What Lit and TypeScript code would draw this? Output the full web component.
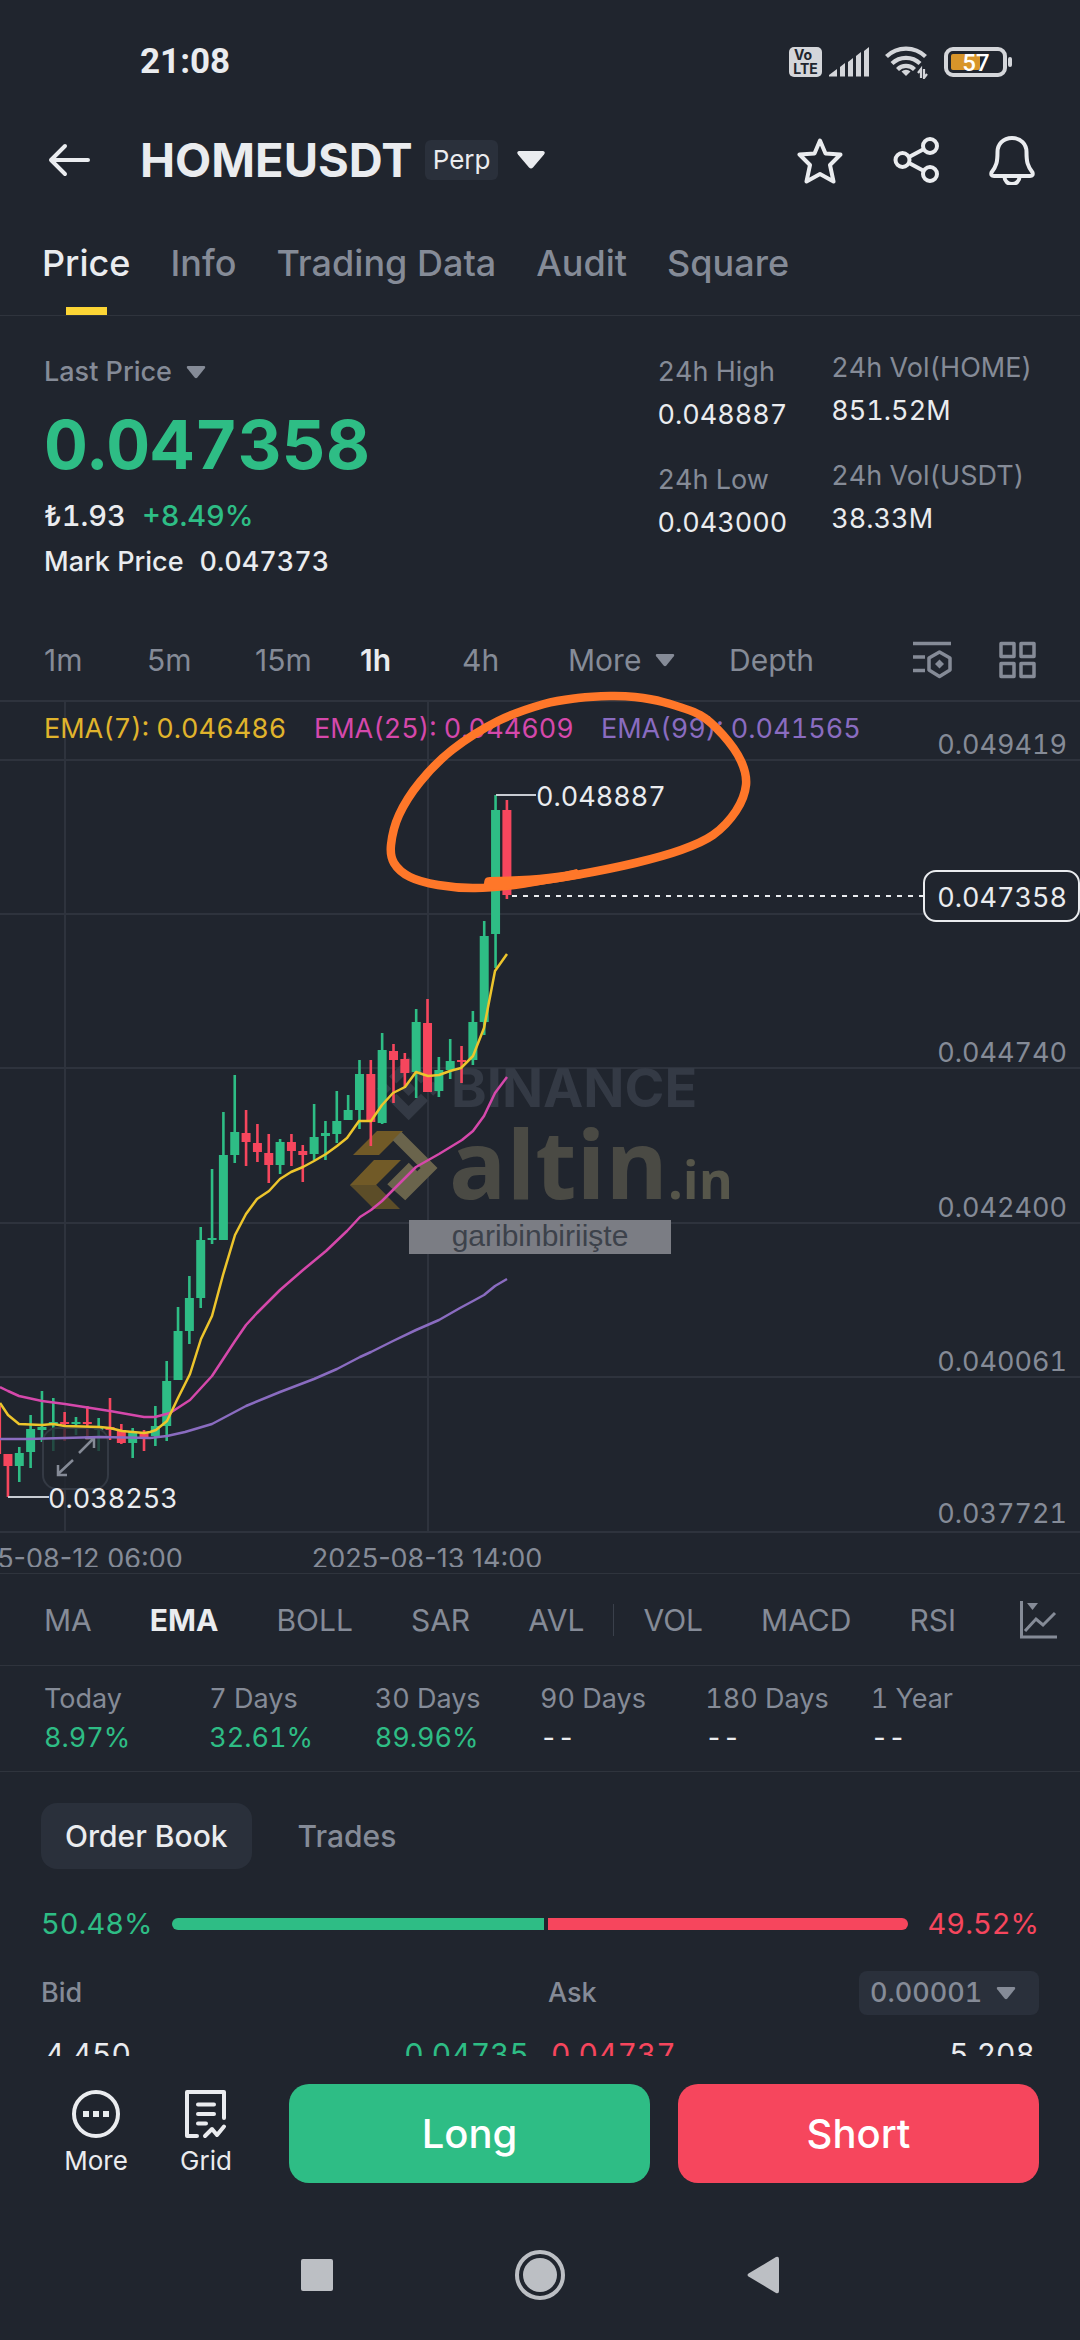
import { LitElement, html, svg, css } from "lit";
import { customElement, state } from "lit/decorators.js";
import { classMap } from "lit/directives/class-map.js";

type Candle = [up: number, high: number, top: number, bottom: number, low: number];

const CANDLES: Candle[] = [
  [0, 706, 706, 754, 754],
  [0, 754, 754, 766, 797],
  [1, 747, 753, 766, 782],
  [1, 715, 729, 752, 768],
  [1, 691, 727, 730, 742],
  [1, 698, 722, 724, 751],
  [0, 712, 722, 723, 741],
  [1, 717, 722, 724, 735],
  [0, 706, 722, 724, 740],
  [1, 718, 727, 730, 751],
  [0, 698, 727, 730, 740],
  [0, 724, 730, 743, 744],
  [1, 728, 732, 743, 758],
  [0, 730, 732, 737, 751],
  [1, 706, 726, 736, 746],
  [1, 661, 681, 726, 741],
  [1, 607, 631, 680, 680],
  [1, 576, 598, 631, 644],
  [1, 527, 540, 598, 608],
  [1, 469, 538, 540, 544],
  [1, 412, 455, 540, 540],
  [1, 375, 432, 455, 463],
  [0, 410, 433, 442, 466],
  [0, 424, 443, 452, 462],
  [0, 434, 453, 465, 483],
  [1, 439, 442, 465, 474],
  [0, 434, 442, 451, 466],
  [0, 445, 451, 455, 482],
  [1, 404, 437, 454, 460],
  [1, 421, 433, 436, 460],
  [1, 391, 421, 434, 443],
  [1, 395, 410, 420, 420],
  [1, 360, 374, 410, 429],
  [0, 360, 374, 422, 446],
  [1, 333, 350, 423, 424],
  [0, 344, 351, 360, 403],
  [0, 353, 359, 373, 387],
  [1, 309, 322, 372, 398],
  [0, 299, 323, 392, 392],
  [1, 357, 370, 391, 397],
  [1, 339, 361, 370, 379],
  [0, 346, 360, 362, 383],
  [1, 311, 322, 360, 365],
  [1, 221, 236, 322, 335],
  [1, 95, 110, 234, 268],
  [0, 100, 110, 195, 199],
];

const STEP = 11.34;
const FIRST_X = -3.4;

const EMA7 =
  "0,703 8,715 19,724 42,725 53,724 65,726 100,727 110,728 122,731 144,733 150,732 156,730 167,721 178,698 190,674 201,639 212,616 223,575 235,535 246,514 257,499 269,491 280,479 291,472 303,467 314,461 326,454 337,446 347,438 359,421 371,421 382,405 393,393 405,387 416,372 428,376 439,375 450,371 461,368 473,356 484,328 495,271 507,254";
const EMA25 =
  "0,687 8,691 19,696 42,701 65,704 110,711 144,717 155,717 170,713 190,700 212,676 235,641 246,625 257,613 280,590 303,570 326,551 347,531 360,517 371,510 382,501 393,490 405,478 416,467 439,454 462,440 473,431 484,416 495,393 507,377";
const EMA99 =
  "0,739 28,739 100,737 150,738 167,736 185,732 212,724 246,706 280,692 314,679 337,669 360,657 371,652 393,641 416,630 439,620 460,608 473,601 484,595 495,586 507,579";

const CIRCLE: [number, number][] = [
  [494, 185], [521, 183], [576, 175], [635, 163], [681, 150], [713, 135], [736, 111], [746, 85], [741, 61],
  [723, 35], [700, 15], [663, 2], [635, -3], [610, -4], [578, -2], [544, 4], [498, 21], [452, 50], [420, 82],
  [399, 115], [391, 145], [394, 163], [410, 177], [438, 185], [475, 188], [521, 184], [576, 174],
];

/** Catmull-Rom spline through the points, written as cubic segments. */
function smooth(points: [number, number][]): string {
  let d = `M${points[0][0]} ${points[0][1]}`;
  for (let i = 0; i < points.length - 1; i++) {
    const p0 = points[Math.max(0, i - 1)];
    const p1 = points[i];
    const p2 = points[i + 1];
    const p3 = points[Math.min(points.length - 1, i + 2)];
    const c1 = [p1[0] + (p2[0] - p0[0]) / 6, p1[1] + (p2[1] - p0[1]) / 6];
    const c2 = [p2[0] - (p3[0] - p1[0]) / 6, p2[1] - (p3[1] - p1[1]) / 6];
    d += `C${c1[0]} ${c1[1]} ${c2[0]} ${c2[1]} ${p2[0]} ${p2[1]}`;
  }
  return d;
}

const caret = html`<svg class="caret" width="20" height="14" viewBox="0 0 20 14" aria-hidden="true">
  <path d="M2 1h16q2 .5 .8 2.200L11.400 12.600q-1.400 1.300-2.800 0L1.200 3.200Q0 1.500 2 1z" fill="currentColor" />
</svg>`;

@customElement("price-chart")
export class PriceChart extends LitElement {
  static styles = css`
    :host {
      display: block;
      border-bottom: 1px solid #2f343d;
    }
    .plot {
      display: block;
      width: 100%;
      overflow: visible;
      position: relative;
    }
    .grid {
      stroke: #2e333d;
      stroke-width: 2;
    }
    .up {
      fill: #2ebd85;
    }
    .down {
      fill: #f6465d;
    }
    .line {
      fill: none;
      stroke-width: 2.500;
      stroke-linejoin: round;
    }
    .label {
      font-size: 27px;
      font-variant-numeric: tabular-nums;
    }
    .date {
      font-variant-numeric: normal;
    }
    .muted {
      fill: #858b97;
    }
    .bright {
      fill: #eaecef;
    }
    .e7 {
      fill: #e0b42c;
    }
    .e25 {
      fill: #d548ab;
    }
    .e99 {
      fill: #8a6cc0;
    }
    .brand {
      font-size: 54px;
      font-weight: 700;
      fill: #343a45;
    }
    .stamp {
      font-family: "Open Sans", "Noto Sans", sans-serif;
      font-weight: 700;
      font-size: 95px;
      fill: #4a4a44;
    }
    .stamp-suffix {
      font-size: 52px;
      fill: #56564a;
    }
    .ribbon {
      font-family: "Liberation Sans", Arial, sans-serif;
      font-size: 30px;
      fill: #3d424b;
    }
  `;

  private candle([up, high, top, bottom, low]: Candle, index: number) {
    const x = FIRST_X + index * STEP;
    return svg`<g class=${up ? "up" : "down"}>
      <rect x=${x - 1.3} y=${high} width="2.600" height=${low - high} />
      <rect x=${x - 4.5} y=${top} width="9" height=${Math.max(2, bottom - top)} />
    </g>`;
  }

  render() {
    return html`<svg class="plot" viewBox="0 0 1080 873" role="img" aria-label="HOMEUSDT price chart, 1 hour">
      <defs>
        <clipPath id="axis"><rect x="0" y="834" width="1080" height="33" /></clipPath>
      </defs>
      <path class="grid" d="M0 1H1080M0 60H1080M0 214H1080M0 368H1080M0 523H1080M0 677H1080M0 832H1080M65 1V832M428 1V832" />

      <g transform="translate(377 357) scale(.5)" fill="#343a45">
        <path d="M38.730 53.200l24.590-24.580 24.600 24.600 14.300-14.310L63.320 0 24.420 38.900zM0 63.310l14.300-14.300 14.310 14.300-14.310 14.310zM38.730 73.410l24.590 24.590 24.600-24.600 14.310 14.290-38.900 38.910-38.910-38.880zM98 63.310l14.300-14.310 14.310 14.300-14.310 14.310zM77.830 63.300L63.320 48.780 48.810 63.280l14.510 14.500z" />
      </g>
      <text class="brand" x="451" y="407">BINANCE</text>
      <path d="M353 455L377 431H403L379 455z" fill="#715a27" />
      <path d="M350 485L374 460H401L376 485L388 497H364z" fill="#715a27" />
      <path d="M362 497L350 485H376L400 509H374z" fill="#5c4d28" />
      <path d="M397 436L429 468L405 492L396 484L413 467" fill="none" stroke="#6a644c" stroke-width="12" />
      <text class="stamp" x="449" y="499">altin</text>
      <text class="stamp stamp-suffix" x="668" y="499">.in</text>

      ${CANDLES.map((c, i) => this.candle(c, i))}

      <rect x="43" y="728" width="65" height="61" rx="14" fill="#20252e" fill-opacity=".75" stroke="#343a44" stroke-width="2" />
      <path d="M79 753L94 738M85 738H94V748M73 760L58 774M58 765V775H67" fill="none" stroke="#858b97" stroke-width="2.500" />

      <polyline class="line" stroke="#8a6cc0" points=${EMA99} />
      <polyline class="line" stroke="#d548ab" points=${EMA25} />
      <polyline class="line" stroke="#edc52c" points=${EMA7} />

      <rect x="409" y="520" width="262" height="34" fill="#7b7d84" />
      <text class="ribbon" x="540" y="546" text-anchor="middle">garibinbiriişte</text>

      <text class="label e7" x="44" y="38">EMA(7): 0.046486</text>
      <text class="label e25" x="314" y="38">EMA(25): 0.044609</text>
      <text class="label e99" x="601" y="38">EMA(99): 0.041565</text>

      <g class="label muted" text-anchor="end">
        <text x="1067" y="54">0.049419</text>
        <text x="1067" y="362">0.044740</text>
        <text x="1067" y="517">0.042400</text>
        <text x="1067" y="671">0.040061</text>
        <text x="1067" y="823">0.037721</text>
      </g>
      <g class="label date muted" text-anchor="middle" clip-path="url(#axis)">
        <text x="65" y="868">2025-08-12 06:00</text>
        <text x="427" y="868">2025-08-13 14:00</text>
      </g>

      <path d="M496 95H536M8 797H49" stroke="#c8ccd3" stroke-width="2" />
      <text class="label bright" x="536" y="106">0.048887</text>
      <text class="label bright" x="48" y="808">0.038253</text>

      <path d="M512 196H924" stroke="#eaecef" stroke-width="2" stroke-dasharray="5 6" />
      <rect x="924" y="171" width="155" height="50" rx="12" fill="#20252e" stroke="#eaecef" stroke-width="2" />
      <text class="label bright" x="1067" y="207" text-anchor="end">0.047358</text>

      <path d=${smooth(CIRCLE)} fill="none" stroke="#ff7729" stroke-width="8.500" stroke-linecap="round" />
      <path d="M485 179Q486 177 490 177Q550 176 577 169L582 178Q530 188 488 190Q482 186 485 179z" fill="#ff7729" />
    </svg>`;
  }
}

@customElement("app-root")
export class AppRoot extends LitElement {
  @state() private tab = "Price";
  @state() private interval = "1h";
  @state() private indicator = "EMA";
  @state() private bookTab = "Order Book";

  static styles = css`
    :host {
      display: block;
      --bg: #20252e;
      --line: #2f343d;
      --muted: #858b97;
      --text: #eaecef;
      --up: #2ebd85;
      --down: #f6465d;
      --chip: #2a303b;
      background: var(--bg);
      color: var(--text);
      font-family: Inter, "Open Sans", sans-serif;
      font-size: 27px;
      line-height: 36px;
      font-variant-numeric: tabular-nums;
    }
    button,
    select {
      font: inherit;
      font-variant-numeric: inherit;
      color: inherit;
      background: none;
      border: 0;
      padding: 0;
      margin: 0;
      text-align: left;
      white-space: nowrap;
    }
    svg {
      display: block;
      flex: none;
    }
    .screen {
      height: 100vh;
      display: flex;
      flex-direction: column;
    }
    .status {
      height: 124px;
      flex: none;
      display: flex;
      align-items: center;
      padding: 0 67px 0 140px;
      font-family: Roboto, sans-serif;
      font-size: 35px;
      font-weight: 700;
    }
    .signals {
      display: flex;
      align-items: center;
      margin-left: auto;
    }
    .signals .sig {
      margin-left: 7px;
    }
    .signals .wifi,
    .signals .batt {
      margin-left: 16px;
    }
    .volte {
      font: 700 14px/14px Inter, sans-serif;
    }
    .charge {
      font: 500 24px/24px Roboto, sans-serif;
    }
    .header {
      height: 72px;
      flex: none;
      display: flex;
      align-items: center;
      padding: 0 44px;
    }
    .back {
      margin-right: 46px;
    }
    .title {
      margin: 0;
      font-size: 47px;
      line-height: 56px;
      font-weight: 700;
    }
    .perp {
      margin-left: 12px;
      padding: 2px 8px;
      border-radius: 6px;
      background: var(--chip);
      font-size: 26px;
    }
    .pick {
      margin-left: 18px;
    }
    .tools {
      margin-left: auto;
      display: flex;
      gap: 48px;
    }
    .tabs {
      flex: none;
      display: flex;
      align-items: flex-end;
      gap: 40px;
      height: 119px;
      padding: 0 42px;
      border-bottom: 1px solid var(--line);
    }
    .tab {
      display: flex;
      flex-direction: column;
      align-items: center;
      gap: 22px;
      font-size: 36px;
      line-height: 44px;
      font-weight: 500;
      color: var(--muted);
    }
    .tab::after {
      content: "";
      width: 41px;
      height: 8px;
    }
    .tab.on {
      color: var(--text);
    }
    .tab.on::after {
      background: #fcd535;
    }
    .content {
      flex: 1;
      min-height: 0;
      overflow: hidden;
    }
    .summary {
      display: flex;
      align-items: flex-start;
      padding: 34px 48px 40px 44px;
    }
    .quote {
      flex: 1;
      padding-top: 4px;
      display: flex;
      flex-direction: column;
      align-items: flex-start;
      gap: 16px;
      font-weight: 500;
    }
    .with-caret {
      display: flex;
      align-items: center;
      gap: 14px;
      color: var(--muted);
    }
    .price {
      color: var(--up);
      font-size: 68px;
      line-height: 76px;
      font-weight: 700;
    }
    .detail {
      display: flex;
      flex-direction: column;
      gap: 10px;
    }
    .pair {
      display: flex;
      gap: 16px;
    }
    .fiat {
      font-size: 29px;
    }
    .gain {
      color: var(--up);
    }
    .stats {
      display: flex;
      gap: 44px;
      margin: 0;
    }
    .stat-col {
      display: flex;
      flex-direction: column;
      gap: 29px;
      margin: 0;
    }
    .stat-col.first {
      padding-top: 4px;
    }
    .stat {
      display: flex;
      flex-direction: column;
      gap: 7px;
    }
    .stat dt {
      color: var(--muted);
    }
    .stat dd {
      margin: 0;
    }
    .intervals {
      display: grid;
      grid-template-columns: 103fr 108fr 105fr 102fr 106fr 161fr 184fr 86fr 37fr;
      align-items: center;
      height: 80px;
      padding: 0 44px;
      font-size: 30px;
      font-variant-numeric: normal;
      color: var(--muted);
    }
    .intervals > * {
      min-width: 0;
    }
    .on {
      color: var(--text);
    }
    .intervals .on {
      font-weight: 600;
    }
    .indicators {
      display: flex;
      align-items: center;
      gap: 58px;
      height: 91px;
      padding: 0 22px 0 44px;
      border-bottom: 1px solid var(--line);
      font-size: 30px;
      color: var(--muted);
    }
    .indicators .on {
      font-weight: 700;
    }
    .rule {
      width: 1px;
      height: 32px;
      margin: 0 -29px;
      background: #3a404b;
    }
    .to-end {
      margin-left: auto;
    }
    .returns {
      padding: 15px 44px;
      border-bottom: 1px solid var(--line);
    }
    table {
      width: 100%;
      table-layout: fixed;
      border-collapse: collapse;
    }
    th,
    td {
      padding: 0;
      text-align: left;
      font-weight: 400;
      white-space: nowrap;
    }
    .returns th {
      color: var(--muted);
      padding-bottom: 3px;
    }
    .book {
      padding: 31px 41px 0;
    }
    .book-tabs {
      display: flex;
      gap: 22px;
      font-size: 30px;
      font-weight: 500;
      color: var(--muted);
    }
    .book-tab {
      height: 66px;
      padding: 0 24px;
      border-radius: 16px;
    }
    .book-tab.on {
      background: var(--chip);
    }
    .ratio {
      display: flex;
      align-items: center;
      gap: 20px;
      margin-top: 37px;
      font-size: 29px;
    }
    .bar {
      flex: 1;
      display: flex;
      gap: 4px;
      height: 12px;
    }
    .bid-bar {
      background: var(--up);
      border-radius: 6px 0 0 6px;
    }
    .ask-bar {
      flex: 1;
      background: var(--down);
      border-radius: 0 6px 6px 0;
    }
    .loss {
      color: var(--down);
    }
    .orders {
      margin-top: 29px;
    }
    .orders th {
      color: var(--muted);
      font-weight: 500;
    }
    .orders td {
      font-size: 30px;
      padding-top: 21px;
    }
    .orders .right {
      text-align: right;
    }
    .orders .ask-head {
      padding-left: 8px;
    }
    .orders .bid-price {
      text-align: right;
      padding-right: 11px;
    }
    .orders .ask-price {
      padding-left: 11px;
    }
    .orders .first-cell {
      padding-left: 4px;
    }
    .orders .last-cell {
      text-align: right;
      padding-right: 4px;
    }
    .step {
      display: inline-flex;
      align-items: center;
      padding-right: 23px;
      border-radius: 8px;
      background: var(--chip);
      vertical-align: top;
    }
    .step select {
      appearance: none;
      height: 44px;
      padding: 0 13px 0 11px;
    }
    .actions {
      flex: none;
      display: flex;
      align-items: flex-start;
      gap: 28px;
      padding: 28px 41px 0 41px;
    }
    .shortcuts {
      display: flex;
      flex: none;
    }
    .shortcut {
      display: flex;
      flex-direction: column;
      align-items: center;
      gap: 4px;
      width: 110px;
      padding-top: 5px;
      font-size: 26px;
    }
    .trade {
      flex: 1;
      height: 99px;
      border-radius: 20px;
      color: #fff;
      font-size: 40px;
      line-height: 48px;
      font-weight: 500;
      text-align: center;
    }
    .long {
      background: var(--up);
    }
    .short {
      background: var(--down);
    }
    .nav {
      flex: none;
      display: flex;
      align-items: center;
      justify-content: center;
      gap: 182px;
      height: 130px;
      margin-top: 27px;
      color: #bcbfc4;
    }
  `;

  private renderStatus() {
    return html`<div class="status">
      <span>21:08</span>
      <div class="signals">
        <svg width="33" height="30" viewBox="0 0 33 30" role="img" aria-label="VoLTE">
          <rect width="33" height="30" rx="5" fill="#d4d6da" />
          <text class="volte" x="5" y="13" fill="#20252e">Vo</text>
          <text class="volte" x="16.500" y="27" text-anchor="middle" fill="#20252e">LTE</text>
        </svg>
        <svg class="sig" width="40" height="30" viewBox="0 0 40 30" fill="#d4d6da" aria-hidden="true">
          <path d="M0 29.500V28L8 22v7.500zM11 29.500V20l5-4v13.500zM19 29.500V15l5-4v18.500zM27 29.500V9l5-4v24.500zM35 29.500V4l5-4v29.500z" />
        </svg>
        <svg class="wifi" width="43" height="34" viewBox="0 0 43 34" fill="none" stroke="#d4d6da" stroke-width="4.200" aria-hidden="true">
          <path d="M1.500 11.500a28 28 0 0 1 39 0M7 18.500a20 20 0 0 1 28 0M12.500 24.500a12 12 0 0 1 17 0" />
          <path d="M21 31l-4.500-4.500a6.500 6.500 0 0 1 9 0z" fill="#d4d6da" stroke="none" />
          <path d="M31 22h12v12H31z" fill="#20252e" stroke="none" />
          <path d="M36 33V24l-3 4M39 24v9l3-4" stroke-width="2.200" />
        </svg>
        <svg class="batt" width="69" height="30" viewBox="0 0 69 30" role="img" aria-label="Battery 57%">
          <rect x="2" y="2" width="59" height="26" rx="7" fill="none" stroke="#d4d6da" stroke-width="4" />
          <rect x="64" y="10" width="4" height="10" rx="2" fill="#d4d6da" />
          <rect x="7" y="7" width="29" height="16" rx="2" fill="#d8952a" />
          <text class="charge" x="32" y="23.500" text-anchor="middle" fill="#fff">57</text>
        </svg>
      </div>
    </div>`;
  }

  private renderHeader() {
    return html`<header class="header">
      <button class="back" aria-label="Back">
        <svg width="50" height="36" viewBox="0 0 50 36" fill="none" stroke="currentColor" stroke-width="4" stroke-linecap="round" stroke-linejoin="round">
          <path d="M44 18H7M21 4L7 18L21 32" />
        </svg>
      </button>
      <h1 class="title">HOMEUSDT</h1>
      <span class="perp">Perp</span>
      <button class="pick" aria-label="Choose pair">
        <svg width="30" height="20" viewBox="0 0 30 20">
          <path d="M3 1h24q3 1 1 3.500L17 17.500q-2 2-4 0L2 4.500Q0 2 3 1z" fill="currentColor" />
        </svg>
      </button>
      <div class="tools">
        <button aria-label="Favourite">
          <svg width="48" height="48" viewBox="0 0 48 48" fill="none" stroke="currentColor" stroke-width="4" stroke-linejoin="round">
            <path d="M24 4.500L29.500 17.500L44.500 18.500L34 29L37.500 45.500L24 38L10.500 45.500L14 29L3.500 18.500L18.500 17.500z" />
          </svg>
        </button>
        <button aria-label="Share">
          <svg width="48" height="48" viewBox="0 0 48 48" fill="none" stroke="currentColor" stroke-width="4">
            <circle cx="10.500" cy="24" r="7" />
            <circle cx="38" cy="10" r="7" />
            <circle cx="38" cy="38" r="7" />
            <path d="M17 21L32 13M17 27L32 35" />
          </svg>
        </button>
        <button aria-label="Price alerts">
          <svg width="48" height="50" viewBox="0 0 48 50" fill="none" stroke="currentColor" stroke-width="4" stroke-linejoin="round">
            <path d="M24 3C15 3 9.500 9.500 9.500 17C9.500 27 8.500 31 3.500 37.500Q2.500 41 6 41H42Q45.500 41 44.500 37.500C39.500 31 38.500 27 38.500 17C38.500 9.500 33 3 24 3z" />
            <path d="M16.500 42a7.500 7 0 0 0 15 0" />
          </svg>
        </button>
      </div>
    </header>`;
  }

  private renderSummary() {
    return html`<section class="summary">
      <div class="quote">
        <button class="with-caret">Last Price ${caret}</button>
        <div class="price">0.047358</div>
        <div class="detail">
          <div class="pair fiat"><span>₺1.93</span><span class="gain">+8.49%</span></div>
          <div class="pair"><span>Mark Price</span><span>0.047373</span></div>
        </div>
      </div>
      <div class="stats">
        <dl class="stat-col first">
          <div class="stat"><dt>24h High</dt><dd>0.048887</dd></div>
          <div class="stat"><dt>24h Low</dt><dd>0.043000</dd></div>
        </dl>
        <dl class="stat-col">
          <div class="stat"><dt>24h Vol(HOME)</dt><dd>851.52M</dd></div>
          <div class="stat"><dt>24h Vol(USDT)</dt><dd>38.33M</dd></div>
        </dl>
      </div>
    </section>`;
  }

  private renderIntervals() {
    return html`<div class="intervals">
      ${["1m", "5m", "15m", "1h", "4h"].map(
        (name) => html`<button class=${classMap({ on: this.interval === name })} @click=${() => (this.interval = name)}>${name}</button>`
      )}
      <button class="with-caret">More ${caret}</button>
      <button>Depth</button>
      <button aria-label="Chart settings">
        <svg width="40" height="38" viewBox="0 0 40 38" fill="none" stroke="currentColor" stroke-width="3.500">
          <path d="M0 2.500H38M0 16H12M0 29.500H12" />
          <path d="M26.500 11L37 17V29L26.500 35.500L16 29V17z" stroke-linejoin="round" />
          <path d="M26.500 18.500L31 23L26.500 27.500L22 23z" fill="currentColor" stroke="none" />
        </svg>
      </button>
      <button aria-label="Layout">
        <svg width="37" height="38" viewBox="0 0 37 38" fill="none" stroke="currentColor" stroke-width="3.500" stroke-linejoin="round">
          <path d="M2 2.500H15V15.500H2zM22 2.500H35V15.500H22zM2 22.500H15V35.500H2zM22 22.500H35V35.500H22z" />
        </svg>
      </button>
    </div>`;
  }

  private indicatorButton(name: string) {
    return html`<button class=${classMap({ on: this.indicator === name })} @click=${() => (this.indicator = name)}>${name}</button>`;
  }

  private renderIndicators() {
    return html`<div class="indicators">
      ${["MA", "EMA", "BOLL", "SAR", "AVL"].map((n) => this.indicatorButton(n))}
      <span class="rule"></span>
      ${["VOL", "MACD", "RSI"].map((n) => this.indicatorButton(n))}
      <button class="to-end" aria-label="All indicators">
        <svg width="40" height="40" viewBox="0 0 40 40" fill="none" stroke="currentColor" stroke-width="3">
          <path d="M3.500 1V37H39M7 31L18 19L25 25L37 13" />
          <path d="M9 3H20L14.500 10z" fill="currentColor" stroke="none" />
        </svg>
      </button>
    </div>`;
  }

  private renderReturns() {
    const periods = [
      ["Today", "8.97%"],
      ["7 Days", "32.61%"],
      ["30 Days", "89.96%"],
      ["90 Days", "--"],
      ["180 Days", "--"],
      ["1 Year", "--"],
    ];
    return html`<div class="returns">
      <table>
        <thead><tr>${periods.map(([name]) => html`<th>${name}</th>`)}</tr></thead>
        <tbody>
          <tr>${periods.map(([, value]) => html`<td class=${classMap({ gain: value !== "--" })}>${value}</td>`)}</tr>
        </tbody>
      </table>
    </div>`;
  }

  private renderBook() {
    const bid = 50.48;
    return html`<section class="book">
      <div class="book-tabs">
        ${["Order Book", "Trades"].map(
          (name) => html`<button
            class=${classMap({ "book-tab": true, on: this.bookTab === name })}
            @click=${() => (this.bookTab = name)}
          >${name}</button>`
        )}
      </div>
      <div class="ratio">
        <span class="gain">50.48%</span>
        <div class="bar">
          <span class="bid-bar" style="width:${bid}%"></span>
          <span class="ask-bar"></span>
        </div>
        <span class="loss">49.52%</span>
      </div>
      <table class="orders">
        <thead>
          <tr>
            <th colspan="2">Bid</th>
            <th class="ask-head">Ask</th>
            <th class="right">
              <span class="step">
                <select aria-label="Price step"><option>0.00001</option></select>
                ${caret}
              </span>
            </th>
          </tr>
        </thead>
        <tbody>
          <tr>
            <td class="first-cell">4,450</td>
            <td class="bid-price gain">0.04735</td>
            <td class="ask-price loss">0.04737</td>
            <td class="last-cell">5,208</td>
          </tr>
        </tbody>
      </table>
    </section>`;
  }

  private renderActions() {
    return html`<footer class="actions">
        <div class="shortcuts">
          <button class="shortcut">
            <svg width="50" height="50" viewBox="0 0 50 50" aria-hidden="true">
              <circle cx="25" cy="25" r="22" fill="none" stroke="currentColor" stroke-width="4" />
              <path d="M12 22h6v6h-6zM22 22h6v6h-6zM32 22h6v6h-6z" fill="currentColor" />
            </svg>
            More
          </button>
          <button class="shortcut">
            <svg width="50" height="50" viewBox="0 0 50 50" fill="none" stroke="currentColor" stroke-width="4" stroke-linecap="round" stroke-linejoin="round" aria-hidden="true">
              <path d="M16 47H6V3H43V29M17 15.500H33M17 25H33M17 34.500H25M24 47L31 40L36 46L43 37.500" />
            </svg>
            Grid
          </button>
        </div>
        <button class="trade long">Long</button>
        <button class="trade short">Short</button>
      </footer>
      <nav class="nav">
        <button aria-label="Recent apps">
          <svg width="32" height="32" viewBox="0 0 32 32"><rect width="32" height="32" rx="2" fill="currentColor" /></svg>
        </button>
        <button aria-label="Home">
          <svg width="50" height="50" viewBox="0 0 50 50">
            <circle cx="25" cy="25" r="23" fill="none" stroke="currentColor" stroke-width="4" />
            <circle cx="25" cy="25" r="17" fill="currentColor" />
          </svg>
        </button>
        <button aria-label="Back to previous screen">
          <svg width="32" height="38" viewBox="0 0 32 38"><path d="M29 1q3-1 3 2V35q0 3-3 2L1.500 20.500q-2-1.500 0-3z" fill="currentColor" /></svg>
        </button>
      </nav>`;
  }

  render() {
    return html`<div class="screen">
      ${this.renderStatus()} ${this.renderHeader()}
      <div class="tabs">
        ${["Price", "Info", "Trading Data", "Audit", "Square"].map(
          (name) => html`<button class=${classMap({ tab: true, on: this.tab === name })} @click=${() => (this.tab = name)}>${name}</button>`
        )}
      </div>
      <main class="content">
        ${this.renderSummary()} ${this.renderIntervals()}
        <price-chart></price-chart>
        ${this.renderIndicators()} ${this.renderReturns()} ${this.renderBook()}
      </main>
      ${this.renderActions()}
    </div>`;
  }
}
